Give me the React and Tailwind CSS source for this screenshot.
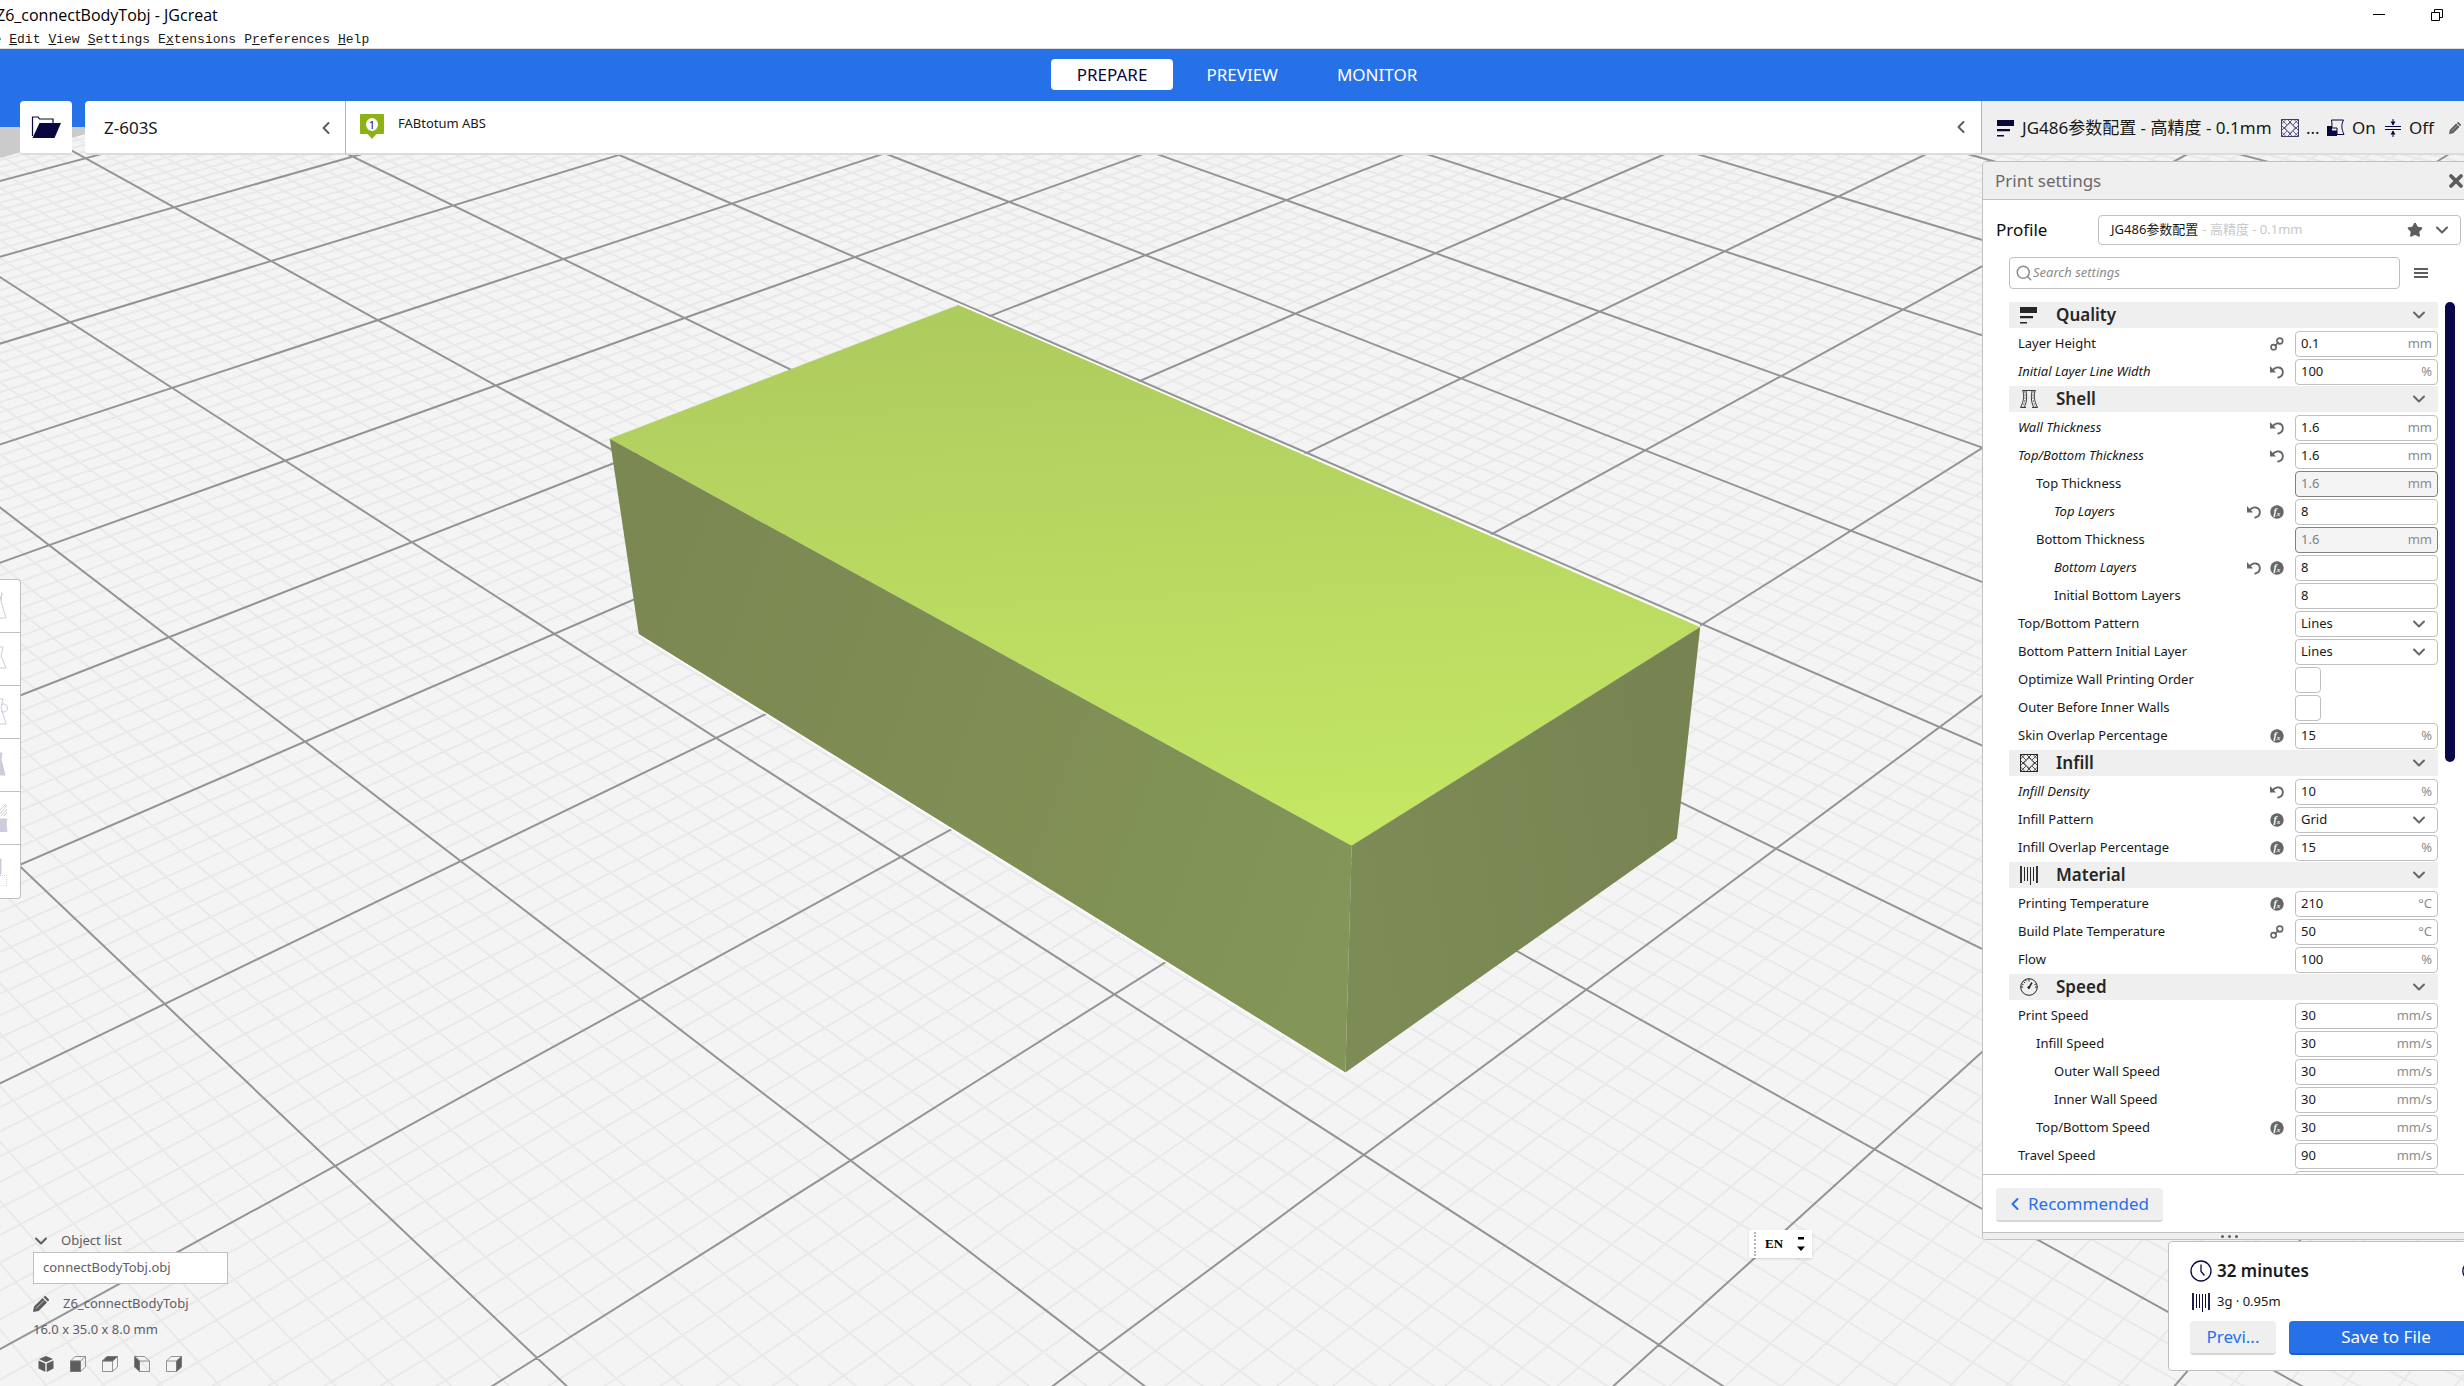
import React from 'react';
import { ChevronDown, ChevronLeft, Star, Search, X, Info } from 'lucide-react';

/* ---------- build plate projection ---------- */

// screen corners of the plate patch that spans 3 x 6 major cells
const P00 = [854.8, 257.1];
const P10 = [285.2, 460.7];
const P11 = [1363.8, 1154.9];
const P01 = [1939.6, 727.1];

const makeProjection = () => {
  const dx1 = P10[0] - P11[0];
  const dx2 = P01[0] - P11[0];
  const dy1 = P10[1] - P11[1];
  const dy2 = P01[1] - P11[1];
  const sx = P00[0] - P10[0] + P11[0] - P01[0];
  const sy = P00[1] - P10[1] + P11[1] - P01[1];
  const den = dx1 * dy2 - dx2 * dy1;
  const g = (sx * dy2 - dx2 * sy) / den;
  const h = (dx1 * sy - sx * dy1) / den;
  const a = P10[0] - P00[0] + g * P10[0];
  const b = P01[0] - P00[0] + h * P01[0];
  const d = P10[1] - P00[1] + g * P10[1];
  const e = P01[1] - P00[1] + h * P01[1];
  const point = (u, v) => {
    const w = g * u + h * v + 1;
    return `${((a * u + b * v + P00[0]) / w).toFixed(1)} ${((d * u + e * v + P00[1]) / w).toFixed(1)}`;
  };
  return { g, h, point };
};

const { g, h, point } = makeProjection();
const NEAR = 0.1;

const lineAlongV = (col) => {
  const u = (col + 2) / 3;
  const vMax = (NEAR - 1 - g * u) / h;
  return `M${point(u, -2)}L${point(u, vMax)}`;
};

const lineAlongU = (row) => {
  const v = (row - 4) / 6;
  const uMax = (NEAR - 1 - h * v) / g;
  return `M${point(-5, v)}L${point(uMax, v)}`;
};

const buildGrid = () => {
  let major = '';
  let minor = '';
  for (let i = -160; i <= 60; i++) {
    if (i % 10 === 0) major += lineAlongV(i / 10);
    else minor += lineAlongV(i / 10);
  }
  for (let i = -80; i <= 160; i++) {
    if (i % 10 === 0) major += lineAlongU(i / 10);
    else minor += lineAlongU(i / 10);
  }
  return { major, minor };
};

const grid = buildGrid();

const Scene = () => (
  <svg
    className="absolute inset-0 h-full w-full"
    viewBox="0 0 2464 1386"
    preserveAspectRatio="xMidYMid slice"
    aria-hidden="true"
  >
    <defs>
      <linearGradient id="top" gradientUnits="userSpaceOnUse" x1="1100" y1="305" x2="1130" y2="845">
        <stop offset="0" stopColor="#aecb5e" />
        <stop offset="1" stopColor="#c4e764" />
      </linearGradient>
      <linearGradient id="left" gradientUnits="userSpaceOnUse" x1="640" y1="640" x2="1350" y2="900">
        <stop offset="0" stopColor="#7b8852" />
        <stop offset="1" stopColor="#839557" />
      </linearGradient>
      <linearGradient id="right" gradientUnits="userSpaceOnUse" x1="1350" y1="860" x2="1690" y2="800">
        <stop offset="0" stopColor="#7d8b56" />
        <stop offset="1" stopColor="#778452" />
      </linearGradient>
    </defs>
    <rect width="2464" height="1386" fill="#f4f4f4" />
    <path d={grid.minor} stroke="#e9e9e9" strokeWidth="2" fill="none" />
    <path d={grid.major} stroke="#949496" strokeWidth="2" fill="none" />
    <path d="M0 100H96V131L0 158z" fill="#cbcbcb" />
    {/* model */}
    <path d="M958.6 304.9L1700.2 627.1M638.8 633.9L1345.4 1072.4" stroke="#ffffff" strokeWidth="3" />
    <path d="M609.7 438.8L958.6 304.9L1700.2 627.1L1351.7 845.8z" fill="url(#top)" />
    <path d="M609.7 438.8L1351.7 845.8L1345.4 1072.4L638.8 633.9z" fill="url(#left)" />
    <path d="M1351.7 845.8L1700.2 627.1L1676.9 838.5L1345.4 1072.4z" fill="url(#right)" />
  </svg>
);

/* ---------- icons ---------- */

const FolderIcon = () => (
  <svg className="h-6 w-[30px]" viewBox="0 0 30 24">
    <path d="M1.5 21V2h5.500l1.500 2H22v4" fill="none" stroke="#08073f" strokeWidth="1.200" />
    <path d="M8.500 8H30l-6.500 15H1.500z" fill="#08073f" />
  </svg>
);

const LayersIcon = () => (
  <svg className="h-[18px] w-[18px] shrink-0" viewBox="0 0 18 18" fill="currentColor">
    <path d="M0 1h17v6H0zM0 10h13v2.200H0zM0 16h7v1.500H0z" />
  </svg>
);

const ShellIcon = () => (
  <svg className="h-[18px] w-[18px] shrink-0" viewBox="0 0 18 18" fill="none" stroke="currentColor" strokeWidth=".9">
    <path d="M2.500 .5h13M.5 17.500H6M12 17.500h5.500" />
    <path d="M2.800 .5c1.500 5.500 1.200 10-2.300 17M15.200 .5c-1.500 5.500-1.200 10 2.300 17" />
    <path d="M6 1c1 6 1 10-1.500 16M12 1c-1 6-1 10 1.500 16" />
    <path d="M4.500 1c1.200 6 .5 11-2 16M13.500 1c-1.200 6-.5 11 2 16" strokeDasharray="2 1" strokeWidth=".5" />
  </svg>
);

const InfillIcon = () => (
  <svg className="h-[18px] w-[18px] shrink-0" viewBox="0 0 18 18" fill="none" stroke="currentColor">
    <path d="M.5 .5h17v17H.5z" />
    <path d="M0 5.500L5.500 0M0 12L12 0M0 18L18 0M6 18L18 6M12.500 18L18 12.500M12.500 0L18 5.500M6 0l12 12M0 0l18 18M0 6l12 12M0 12.500L5.500 18" strokeWidth=".8" />
    <circle cx="9" cy="9" r="4.500" fill="#efefef" stroke="none" />
    <path d="M9 3.500L14.500 9L9 14.500L3.500 9z" />
  </svg>
);

const MaterialIcon = () => (
  <svg className="h-5 w-[18px] shrink-0" viewBox="0 0 18 20" stroke="currentColor" fill="none">
    <path d="M1 1v17M17 1v17" strokeWidth="1.800" />
    <path d="M4.500 2v14M7.500 2v14M10.500 2v18M13.500 2v14" />
  </svg>
);

const SpeedIcon = () => (
  <svg className="h-[18px] w-[18px] shrink-0" viewBox="0 0 18 18" stroke="currentColor" fill="none">
    <circle cx="9" cy="9" r="8.300" />
    <path d="M9 1v2.500M3.500 3.500l1.500 1.500M1 9h2M17 9h-2M5.500 1.800l.6 1.500M2 6l1.500 .6M16 6l-1.500 .6" />
    <path d="M9 9.500l3-5" strokeWidth="1.500" />
    <circle cx="8.800" cy="9.500" r="1" fill="currentColor" />
  </svg>
);

const ClockIcon = () => (
  <svg className="h-[22px] w-[22px] shrink-0" viewBox="0 0 22 22" fill="none" stroke="#08073f" strokeWidth="1.300">
    <circle cx="11" cy="11" r="10" />
    <path d="M11 4.500V11.500l3.500 4" />
  </svg>
);

const SupportIcon = () => (
  <svg className="h-[18px] w-[18px]" viewBox="0 0 18 18">
    <path d="M4.500 1h12c-2.500 5-2 9 .5 14.500h-7V9H5c0-3 0-5-.5-8z" fill="none" stroke="#08073f" />
    <path d="M0 7h5v4.500h5V17H0z" fill="#08073f" />
  </svg>
);

const AdhesionIcon = () => (
  <svg className="h-[18px] w-4" viewBox="0 0 16 18" fill="none" stroke="#08073f">
    <path d="M0 7.500h16M0 10.500h16M8 0v6M8 12v6" />
    <path d="M5.500 2.500h5L8 6.500zM5.500 15.500h5L8 11.500z" fill="#08073f" stroke="none" />
  </svg>
);

const PencilIcon = ({ className }) => (
  <svg className={className} viewBox="0 0 16 16" fill="#5d5d5d">
    <path d="M0 16l1-5.500L9.500 2L14 6.500L5.500 15zM10.500 1.200l1-1a1 1 0 0 1 1.300 0l3 3a1 1 0 0 1 0 1.300l-1 1z" />
    <path d="M3 12.500L11 4.500" stroke="#f0f0f0" strokeWidth=".7" />
  </svg>
);

const LinkIcon = () => (
  <svg className="h-[14px] w-[14px]" viewBox="0 0 14 14" fill="none" stroke="#666666" strokeWidth="1.600">
    <circle cx="9.800" cy="4" r="2.900" />
    <circle cx="3.600" cy="10.200" r="2.600" />
    <path d="M4.500 9.300l4.300-4.300" />
  </svg>
);

const UndoIcon = () => (
  <svg className="h-[14px] w-[14px]" viewBox="0 0 14 14" fill="none">
    <path d="M2.500 5.500C6 .5 12.500 2 12.800 6.800C13 10 11 12 7.500 12.800" stroke="#666666" strokeWidth="1.900" />
    <path d="M0 1v6.500h6z" fill="#666666" />
  </svg>
);

const FxIcon = () => (
  <svg className="h-[14px] w-[14px]" viewBox="0 0 14 14">
    <circle cx="7" cy="7" r="6.700" fill="#666666" />
    <text x="3.500" y="10" fontSize="10" fontStyle="italic" fontWeight="bold" fontFamily="Liberation Serif, serif" fill="#ffffff">
      f<tspan fontSize="7" dy="1">x</tspan>
    </text>
  </svg>
);

const stateIcons = { link: LinkIcon, undo: UndoIcon, fx: FxIcon };

// faces: outline cube with one face filled
const cubeViews = [
  { name: '3D view', solid: true },
  { name: 'Front view', face: 'M.5 5h10v10.500H.5z' },
  { name: 'Top view', face: 'M.5 5L5 .5h10.500L10.500 5z' },
  { name: 'Left view', face: 'M.5 .5L5.500 5v10.500L.5 11z', flip: true },
  { name: 'Right view', face: 'M10.500 5l5-4.500V11l-5 4.500z' }
];

const CubeIcon = ({ view }) => {
  if (view.solid) {
    return (
      <svg className="h-4 w-4" viewBox="0 0 16 16" fill="#5d5d5d">
        <path d="M8 0l7 3-7 3.200L1 3zM.5 4.500L7.300 7.500V16L.5 12.500zM15.500 4.500L8.700 7.500V16l6.800-3.500z" />
      </svg>
    );
  }
  return (
    <svg className="h-4 w-4" viewBox="0 0 16 16" fill="none" stroke="#7a7a7a" strokeWidth=".8">
      {view.flip ? (
        <path d="M5.500 5h10v10.500h-10zM.5 .5h10L15.500 5M.5 .5L5.500 5" />
      ) : (
        <path d="M.5 5h10v10.500H.5zM.5 5L5 .5h10.500L10.500 5M15.500 .5V11l-5 4.500" />
      )}
      <path d={view.face} fill="#5d5d5d" />
    </svg>
  );
};

const toolShapes = [
  { name: 'Move', d: 'M1 1h1L0 8M2 1l-1 8l5 17H0' },
  { name: 'Scale', d: 'M0 2h3L1 11l5 12H0' },
  { name: 'Rotate', d: 'M0 1h3L1 9l5 17H0M1 7a4 4 0 1 1 0 6' },
  { name: 'Mirror', d: 'M0 2h2L1 8l4 16H0z', fill: true },
  { name: 'Per model settings', d: 'M0 15h7l-1 5l1 8H0z', fill: true, hatch: 'M0 6l6-6M0 10l7-9M1 12l6-7M4 12l3-4' },
  { name: 'Support blocker', d: 'M0 1h1v15H0z', fill: true, hatch: 'M0 17.500h6.500V28H0' }
];

/* ---------- data ---------- */

const sections = [
  {
    title: 'Quality',
    icon: LayersIcon,
    rows: [
      { label: 'Layer Height', value: '0.1', unit: 'mm', state: ['link'] },
      { label: 'Initial Layer Line Width', value: '100', unit: '%', state: ['undo'] }
    ]
  },
  {
    title: 'Shell',
    icon: ShellIcon,
    rows: [
      { label: 'Wall Thickness', value: '1.6', unit: 'mm', state: ['undo'] },
      { label: 'Top/Bottom Thickness', value: '1.6', unit: 'mm', state: ['undo'] },
      { label: 'Top Thickness', value: '1.6', unit: 'mm', level: 1, disabled: true },
      { label: 'Top Layers', value: '8', level: 2, state: ['undo', 'fx'] },
      { label: 'Bottom Thickness', value: '1.6', unit: 'mm', level: 1, disabled: true },
      { label: 'Bottom Layers', value: '8', level: 2, state: ['undo', 'fx'] },
      { label: 'Initial Bottom Layers', value: '8', level: 2 },
      { label: 'Top/Bottom Pattern', value: 'Lines', type: 'select' },
      { label: 'Bottom Pattern Initial Layer', value: 'Lines', type: 'select' },
      { label: 'Optimize Wall Printing Order', type: 'check' },
      { label: 'Outer Before Inner Walls', type: 'check' },
      { label: 'Skin Overlap Percentage', value: '15', unit: '%', state: ['fx'] }
    ]
  },
  {
    title: 'Infill',
    icon: InfillIcon,
    rows: [
      { label: 'Infill Density', value: '10', unit: '%', state: ['undo'] },
      { label: 'Infill Pattern', value: 'Grid', type: 'select', state: ['fx'] },
      { label: 'Infill Overlap Percentage', value: '15', unit: '%', state: ['fx'] }
    ]
  },
  {
    title: 'Material',
    icon: MaterialIcon,
    rows: [
      { label: 'Printing Temperature', value: '210', unit: '°C', state: ['fx'] },
      { label: 'Build Plate Temperature', value: '50', unit: '°C', state: ['link'] },
      { label: 'Flow', value: '100', unit: '%' }
    ]
  },
  {
    title: 'Speed',
    icon: SpeedIcon,
    rows: [
      { label: 'Print Speed', value: '30', unit: 'mm/s' },
      { label: 'Infill Speed', value: '30', unit: 'mm/s', level: 1 },
      { label: 'Outer Wall Speed', value: '30', unit: 'mm/s', level: 2 },
      { label: 'Inner Wall Speed', value: '30', unit: 'mm/s', level: 2 },
      { label: 'Top/Bottom Speed', value: '30', unit: 'mm/s', level: 1, state: ['fx'] },
      { label: 'Travel Speed', value: '90', unit: 'mm/s' },
      { label: 'Initial Layer Speed', value: '15', unit: 'mm/s' }
    ]
  }
];

const menus = [
  ['', 'F', 'ile'],
  ['', 'E', 'dit'],
  ['', 'V', 'iew'],
  ['', 'S', 'ettings'],
  ['E', 'x', 'tensions'],
  ['P', 'r', 'eferences'],
  ['', 'H', 'elp']
];

/* ---------- settings list ---------- */

const levelPadding = ['pl-[9px]', 'pl-[27px]', 'pl-[45px]'];

const SettingControl = ({ row, id }) => {
  if (row.type === 'check') {
    return (
      <div className="flex w-[143px]">
        <input id={id} type="checkbox" className="h-[26px] w-[26px] appearance-none rounded-sm border border-[#c0c0c0] bg-white" />
      </div>
    );
  }
  if (row.type === 'select') {
    return (
      <div className="relative w-[143px]">
        <select
          id={id}
          defaultValue={row.value}
          className="block h-[26px] w-full appearance-none rounded-sm border border-[#c0c0c0] bg-white px-[5px] text-[13px] text-[#191919]"
        >
          <option>{row.value}</option>
        </select>
        <ChevronDown className="pointer-events-none absolute top-[3px] right-[9px] h-5 w-5 text-[#666666]" strokeWidth={2.4} />
      </div>
    );
  }
  return (
    <div
      className={`flex h-[26px] w-[143px] items-center rounded-sm border px-[5px] text-[13px] ${
        row.disabled ? 'border-[#808080] bg-[#f4f4f4]' : 'border-[#c0c0c0] bg-white'
      }`}
    >
      <input
        id={id}
        type="text"
        defaultValue={row.value}
        disabled={row.disabled}
        className="w-0 min-w-0 flex-1 bg-transparent text-[#191919] outline-none disabled:text-[#808080]"
      />
      {row.unit && <span className="text-[#8c8c8c]">{row.unit}</span>}
    </div>
  );
};

const SettingRow = ({ row }) => {
  const id = row.label.toLowerCase().replace(/[^a-z]+/g, '-');
  const state = row.state || [];
  const changed = state.includes('undo');
  return (
    <div className="flex h-7 shrink-0 items-center">
      <label
        htmlFor={id}
        className={`flex-1 text-[13px] whitespace-nowrap text-[#191919] ${levelPadding[row.level || 0]} ${changed ? 'italic' : ''}`}
      >
        {row.label}
      </label>
      <div className="flex gap-[9px] pr-[11px]">
        {state.map((name) => {
          const Icon = stateIcons[name];
          return <Icon key={name} />;
        })}
      </div>
      <SettingControl row={row} id={id} />
    </div>
  );
};

const SettingSection = ({ section }) => {
  const Icon = section.icon;
  return (
    <section className="flex shrink-0 flex-col">
      <div className="h-7">
        <button type="button" className="flex h-[26px] w-full items-center bg-[#efefef] pr-[9px] pl-[11px] text-[#262626]">
          <Icon />
          <span className="ml-[18px] flex-1 text-left text-[17px] leading-[26px] font-semibold">{section.title}</span>
          <ChevronDown className="h-5 w-5 text-[#666666]" strokeWidth={2.4} />
        </button>
      </div>
      {section.rows.map((row) => (
        <SettingRow key={row.label} row={row} />
      ))}
    </section>
  );
};

const PrintSettings = () => (
  <aside className="flex min-h-0 flex-1 flex-col overflow-hidden rounded border border-[#c0c0c0] bg-white">
    <div className="flex h-[38px] shrink-0 items-center justify-between border-b border-[#c0c0c0] bg-[#efefef] pr-[10px] pl-[12px]">
      <h2 className="text-[17px] text-[#6a6a6a]">Print settings</h2>
      <button type="button" aria-label="Close">
        <X className="h-5 w-5 text-[#5d5d5d]" strokeWidth={4.5} />
      </button>
    </div>

    <div className="flex shrink-0 items-center justify-between pt-[15px] pr-[15px] pl-[13px]">
      <label htmlFor="profile" className="text-[17px] text-[#0c0c0c]">Profile</label>
      <div className="relative flex h-[30px] w-[363px] items-center rounded border border-[#c0c0c0] pr-2 pl-3 text-[13px]">
        <span className="text-[#191919]">JG486参数配置</span>
        <span className="flex-1 pl-1 text-[#c8c8c8]">- 高精度 - 0.1mm</span>
        <Star className="mr-[9px] h-4 w-4 text-[#5d5d5d]" fill="currentColor" />
        <ChevronDown className="h-5 w-5 text-[#5d5d5d]" strokeWidth={2.4} />
        <select id="profile" className="absolute inset-0 h-full w-full opacity-0">
          <option>JG486参数配置 - 高精度 - 0.1mm</option>
        </select>
      </div>
    </div>

    <div className="flex shrink-0 items-center pt-3 pl-[26px]">
      <div className="flex h-8 w-[391px] items-center rounded-sm border border-[#c0c0c0] px-[5px]">
        <Search className="h-[18px] w-[18px] text-[#8c8c8c]" strokeWidth={2} />
        <input
          type="text"
          aria-label="Search settings"
          placeholder="Search settings"
          className="flex-1 text-[13px] italic outline-none placeholder:text-[#8c8c8c]"
        />
      </div>
      <button type="button" aria-label="Setting visibility" className="ml-[14px] flex flex-col gap-[2px]">
        <span className="h-[2px] w-[14px] bg-[#5d5d5d]" />
        <span className="h-[2px] w-[14px] bg-[#5d5d5d]" />
        <span className="h-[2px] w-[14px] bg-[#5d5d5d]" />
      </button>
    </div>

    <div className="mt-[13px] flex min-h-0 flex-1 pl-[26px]">
      <div className="flex w-[429px] flex-col overflow-hidden">
        {sections.map((section) => (
          <SettingSection key={section.title} section={section} />
        ))}
      </div>
      <div className="ml-[7px] h-[460px] w-[10px] rounded-full bg-[#08074a]" />
    </div>

    <div className="flex h-[58px] shrink-0 items-start border-t border-[#c0c0c0] pt-[13px] pl-[13px]">
      <button
        type="button"
        className="flex h-[34px] w-[167px] items-center rounded-sm border-b-2 border-[#d6d6d6] bg-[#efefef] pl-[9px] text-[17px] text-[#2671e7]"
      >
        <ChevronLeft className="mr-[3px] h-5 w-5" strokeWidth={2.4} />
        Recommended
      </button>
    </div>
    <div className="flex h-[7px] shrink-0 items-center justify-center gap-1 border-t border-[#c0c0c0] bg-[#efefef]">
      <span className="h-[3px] w-[3px] rounded-full bg-[#5d5d5d]" />
      <span className="h-[3px] w-[3px] rounded-full bg-[#5d5d5d]" />
      <span className="h-[3px] w-[3px] rounded-full bg-[#5d5d5d]" />
    </div>
  </aside>
);

const JobPanel = () => (
  <section className="mt-px -mr-7 ml-auto h-[130px] w-[337px] shrink-0 rounded border border-[#c0c0c0] bg-white px-[21px] pt-[17px]">
    <div className="flex h-6 items-center">
      <ClockIcon />
      <span className="ml-[5px] flex-1 text-[17px] font-semibold text-[#191919]">32 minutes</span>
      <Info className="h-[22px] w-[22px] text-[#08073f]" strokeWidth={1.5} />
    </div>
    <div className="mt-[7px] flex h-6 items-center pl-[2px] text-[#08073f]">
      <MaterialIcon />
      <span className="ml-[7px] text-[13px] text-[#191919]">3g · 0.95m</span>
    </div>
    <div className="mt-[7px] flex gap-[13px]">
      <button type="button" className="h-[34px] w-[86px] rounded-sm border-b-2 border-[#d6d6d6] bg-[#efefef] text-[17px] text-[#2671e7]">
        Previ...
      </button>
      <button type="button" className="h-[34px] flex-1 rounded-sm border-b-2 border-[#1d5fc8] bg-[#2671e7] text-[17px] text-white">
        Save to File
      </button>
    </div>
  </section>
);

/* ---------- left side ---------- */

const ToolPanel = () => (
  <nav className="mt-[418px] flex w-[21px] flex-col divide-y divide-[#c0c0c0] overflow-hidden rounded-r border border-l-0 border-[#c0c0c0] bg-white">
    {toolShapes.map((tool) => (
      <button key={tool.name} type="button" aria-label={tool.name} className="flex h-[53px] items-center">
        <svg className="h-7 w-2" viewBox="0 0 8 28" fill="none" stroke="#cdcbdc">
          <path d={tool.d} fill={tool.fill ? '#cdcbdc' : 'none'} />
          {tool.hatch && <path d={tool.hatch} strokeDasharray={tool.name === 'Support blocker' ? '1 1' : 'none'} />}
        </svg>
      </button>
    ))}
  </nav>
);

const ObjectList = () => (
  <section className="mt-auto flex flex-col pb-[14px] pl-[33px] text-[13px] text-[#5d5d66]">
    <button type="button" className="flex h-[23px] items-center pr-2">
      <ChevronDown className="-ml-0.5 h-5 w-5" strokeWidth={2.4} />
      <span className="ml-[10px]">Object list</span>
    </button>
    <div className="flex h-8 w-[195px] items-center border border-[#c0c0c0] bg-white pl-[9px]">connectBodyTobj.obj</div>
    <div className="mt-2 flex h-6 items-center">
      <PencilIcon className="h-4 w-4" />
      <label htmlFor="job-name" className="sr-only">Job name</label>
      <input id="job-name" defaultValue="Z6_connectBodyTobj" className="ml-[14px] w-40 bg-transparent outline-none" />
    </div>
    <p className="mt-px h-6 leading-6">16.0 x 35.0 x 8.0 mm</p>
    <div className="mt-[15px] flex gap-4 pl-[5px]">
      {cubeViews.map((view) => (
        <button key={view.name} type="button" aria-label={view.name}>
          <CubeIcon view={view} />
        </button>
      ))}
    </div>
  </section>
);

/* ---------- top bars ---------- */

const TitleBar = () => (
  <div className="flex h-[29px] shrink-0 items-center justify-between bg-white">
    <h1 className="-ml-1 font-['Open_Sans','Noto_Sans',sans-serif] text-[16px] text-black">Z6_connectBodyTobj - JGcreat</h1>
    <div className="flex items-center gap-[46px] pr-[21px]">
      <button type="button" aria-label="Minimize" className="flex h-3 w-3 items-center">
        <span className="h-px w-full bg-black" />
      </button>
      <button type="button" aria-label="Restore">
        <svg className="h-3 w-3" viewBox="0 0 12 12" fill="none" stroke="#000000">
          <path d="M.5 3.500h8v8h-8zM3.500 3V.5h8v8H9" />
        </svg>
      </button>
    </div>
  </div>
);

const MenuBar = () => (
  <nav className="flex h-[20px] shrink-0 border-b border-[#dcdcdc] bg-white pt-[3px] font-['Liberation_Mono',monospace] text-[13px] text-[#191919]">
    <div className="-ml-[30px] flex items-center gap-2">
      {menus.map(([before, key, after]) => (
        <button key={key + after} type="button" className="leading-4">
          {before}
          <span className="underline">{key}</span>
          {after}
        </button>
      ))}
    </div>
  </nav>
);

const StageTabs = () => (
  <header className="flex h-[78px] shrink-0 items-start justify-center gap-[7px] bg-[#2671e7] pt-[10px] pl-[30px] text-[17px]">
    <button type="button" className="h-[31px] rounded-sm bg-white px-[26px] text-[#08073f]">PREPARE</button>
    <button type="button" className="h-[31px] px-[26px] text-white">PREVIEW</button>
    <button type="button" className="h-[31px] px-[26px] text-white">MONITOR</button>
  </header>
);

const Toolbar = () => (
  <div className="-mt-[26px] -mr-[13px] flex h-[54px] shrink-0 pl-5">
    <button type="button" aria-label="Open file" className="flex w-[52px] shrink-0 items-center justify-center rounded border-b-2 border-[#dcdcdc] bg-white">
      <FolderIcon />
    </button>
    <button
      type="button"
      className="ml-[13px] flex w-[261px] shrink-0 items-center justify-between rounded-l border-r border-b-2 border-r-[#b4b4b4] border-b-[#dcdcdc] bg-white pt-px pr-[9px] pl-[19px] text-[17px] text-[#191919]"
    >
      Z-603S
      <ChevronLeft className="h-5 w-5 text-[#5d5d5d]" strokeWidth={2.4} />
    </button>
    <button type="button" className="flex min-w-0 flex-1 items-center border-b-2 border-[#dcdcdc] bg-white pr-[10px] pl-[13px] text-left">
      <svg className="h-[26px] w-[26px]" viewBox="0 0 25 26">
        <path d="M1.500 0h22a1 1 0 0 1 1 1v18a1 1 0 0 1-1 1H17l-4.500 5L8 20H1.500a1 1 0 0 1-1-1V1a1 1 0 0 1 1-1z" fill="#8db215" />
        <ellipse cx="12.500" cy="10.500" rx="6" ry="6.500" fill="#ffffff" />
        <text x="12.500" y="14.500" fontSize="11" textAnchor="middle" fill="#191919">1</text>
      </svg>
      <span className="flex-1 pb-[6px] pl-[13px] text-[13px] text-[#191919]">FABtotum ABS</span>
      <ChevronLeft className="h-5 w-5 text-[#5d5d5d]" strokeWidth={2.4} />
    </button>
    <button
      type="button"
      className="flex w-[496px] shrink-0 items-center border-b-2 border-l border-l-[#b4b4b4] border-b-[#dcdcdc] bg-[#efefef] pt-px pl-[15px] text-[17px] whitespace-nowrap text-[#191919]"
    >
      <span className="text-[#08073f]"><LayersIcon /></span>
      <span className="w-[266px] pl-[7px] text-left">JG486参数配置 - 高精度 - 0.1mm</span>
      <span className="text-[#3c3b6e]"><InfillIcon /></span>
      <span className="w-7 pl-[7px] text-left">...</span>
      <SupportIcon />
      <span className="w-10 pl-[7px] text-left">On</span>
      <AdhesionIcon />
      <span className="w-12 pl-2 text-left">Off</span>
      <PencilIcon className="h-3 w-3" />
    </button>
  </div>
);

const LanguageBar = () => (
  <div className="absolute right-[652px] bottom-[128px] flex h-7 w-[63px] items-center bg-white shadow-sm">
    <span className="ml-[5px] h-6 border-l-2 border-dotted border-[#b4b4b4]" />
    <span className="ml-[9px] font-['Liberation_Serif',serif] text-[13px] font-bold text-black">EN</span>
    <svg className="ml-[14px] h-[14px] w-2" viewBox="0 0 8 14">
      <path d="M1 0h6v2.500H1zM0 9.500h8L4 14z" />
    </svg>
  </div>
);

const App = () => (
  <div className="relative flex h-screen flex-col overflow-hidden font-['Noto_Sans','Noto_Sans_CJK_SC',sans-serif]">
    <Scene />
    <div className="relative flex min-h-0 flex-1 flex-col">
      <TitleBar />
      <MenuBar />
      <StageTabs />
      <Toolbar />
      <main className="flex min-h-0 flex-1 justify-between pt-[6px]">
        <div className="flex flex-col">
          <ToolPanel />
          <ObjectList />
        </div>
        <div className="-mr-[13px] flex w-[495px] flex-col pb-[15px]">
          <PrintSettings />
          <JobPanel />
        </div>
      </main>
      <LanguageBar />
    </div>
  </div>
);

export default App;
